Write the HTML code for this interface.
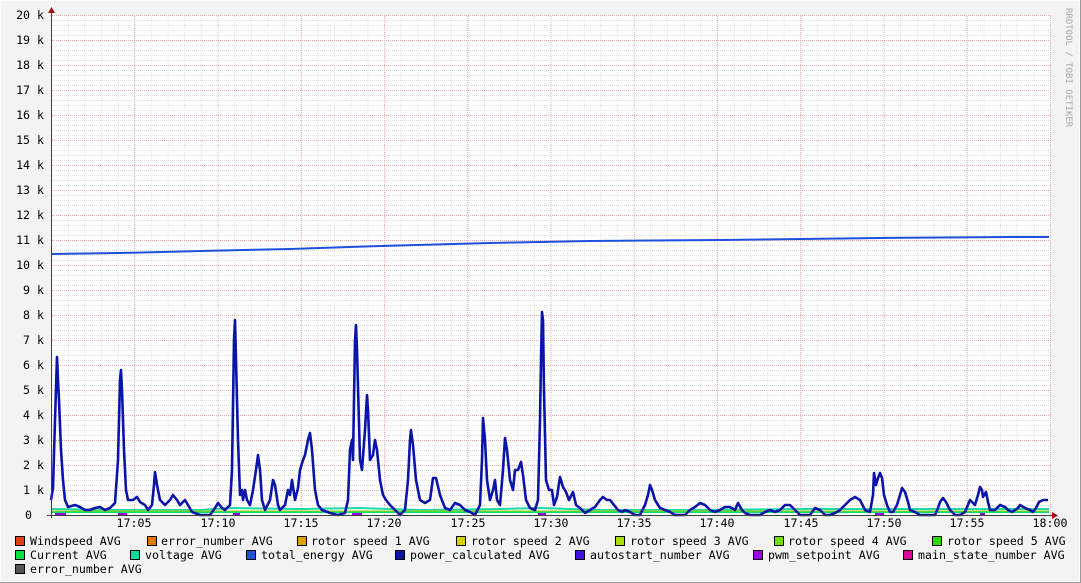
<!DOCTYPE html>
<html><head><meta charset="utf-8"><style>
html,body{margin:0;padding:0;background:#f3f3f3;}
svg{display:block;}
text{font-family:"DejaVu Sans Mono","Liberation Mono",monospace;font-size:11.6px;fill:#000;}
</style></head><body>
<svg width="1081" height="583" viewBox="0 0 1081 583" xmlns="http://www.w3.org/2000/svg">
<defs>
<pattern id="hmin" x="0" y="15" width="1081" height="5" patternUnits="userSpaceOnUse"><line x1="0" y1="0.5" x2="1081" y2="0.5" stroke="#e2e2e2" stroke-dasharray="1,1"/></pattern>
<pattern id="vmin" x="51" y="0" width="16.65" height="583" patternUnits="userSpaceOnUse"><line x1="0.5" y1="0" x2="0.5" y2="583" stroke="#e2e2e2" stroke-dasharray="1,1"/></pattern>
<pattern id="hmaj" x="0" y="15" width="1081" height="25" patternUnits="userSpaceOnUse"><line x1="0" y1="0.5" x2="1081" y2="0.5" stroke="#ecacac" stroke-dasharray="1,1"/></pattern>
<pattern id="vmaj" x="51" y="0" width="83.25" height="583" patternUnits="userSpaceOnUse"><line x1="0.5" y1="0" x2="0.5" y2="583" stroke="#ecacac" stroke-dasharray="1,1"/></pattern>
</defs>
<rect x="0" y="0" width="1081" height="583" fill="#f3f3f3"/>
<rect x="0.5" y="0.5" width="1079" height="581" fill="none" stroke="#fcfcfc"/>
<line x1="1080.5" y1="0" x2="1080.5" y2="583" stroke="#9a9a9a"/>
<line x1="0" y1="582.5" x2="1081" y2="582.5" stroke="#9a9a9a"/>
<rect x="51" y="15" width="1000" height="500" fill="#fff"/>
<rect x="51" y="15" width="1000" height="500" fill="url(#hmin)"/>
<rect x="51" y="15" width="1000" height="500" fill="url(#vmin)"/>
<rect x="51" y="15" width="1000" height="500" fill="url(#hmaj)"/>
<rect x="51" y="15" width="1000" height="500" fill="url(#vmaj)"/>
<g text-anchor="end">
<text x="44" y="19">20 k</text><text x="44" y="44">19 k</text><text x="44" y="69">18 k</text><text x="44" y="94">17 k</text><text x="44" y="119">16 k</text><text x="44" y="144">15 k</text><text x="44" y="169">14 k</text><text x="44" y="194">13 k</text><text x="44" y="219">12 k</text><text x="44" y="244">11 k</text><text x="44" y="269">10 k</text><text x="44" y="294">9 k</text><text x="44" y="319">8 k</text><text x="44" y="344">7 k</text><text x="44" y="369">6 k</text><text x="44" y="394">5 k</text><text x="44" y="419">4 k</text><text x="44" y="444">3 k</text><text x="44" y="469">2 k</text><text x="44" y="494">1 k</text><text x="32" y="519">0</text>
</g>
<g text-anchor="middle">
<text x="134" y="527">17:05</text><text x="218" y="527">17:10</text><text x="301" y="527">17:15</text><text x="384" y="527">17:20</text><text x="468" y="527">17:25</text><text x="551" y="527">17:30</text><text x="634" y="527">17:35</text><text x="717" y="527">17:40</text><text x="801" y="527">17:45</text><text x="884" y="527">17:50</text><text x="967" y="527">17:55</text><text x="1050" y="527">18:00</text>
</g>
<polyline fill="none" stroke="#00e070" stroke-width="2" points="51,512 1049,512"/>
<polyline fill="none" stroke="#20d8a8" stroke-width="2" points="51,509 120,510 200,510 230,508 300,509 360,508 420,510 500,509 540,508 600,510 700,510 800,509 900,509 1000,509 1049,509"/>
<polyline fill="none" stroke="#b0d000" stroke-width="1" points="51,511 1049,511"/>
<g stroke="#a000e0" stroke-width="2"><line x1="55" y1="514" x2="66" y2="514"/><line x1="118" y1="514" x2="127" y2="514"/><line x1="233" y1="514" x2="240" y2="514"/><line x1="352" y1="514" x2="362" y2="514"/><line x1="538" y1="514" x2="546" y2="514"/><line x1="875" y1="514" x2="884" y2="514"/><line x1="980" y1="514" x2="985" y2="514"/></g>
<polyline fill="none" stroke="#1e50dc" stroke-width="2" points="51,254 120,253 200,251 290,249 380,246 490,243 590,241 720,240 880,238 1010,237 1049,237"/>
<polyline fill="none" stroke="#0a14a8" stroke-width="2.6" stroke-linejoin="round" points="51,500 53,488 55,420 57,357 58,380 59,400 61,450 63,480 65,500 68,507 75,505 80,507 85,510 90,510 95,508 100,507 105,510 110,508 113,505 115,503 118,460 120,380 121,370 122,390 124,450 126,490 128,500 133,500 137,497 140,502 145,505 148,510 152,505 154,485 155,472 157,485 160,500 165,505 170,500 173,495 177,500 180,505 185,500 188,505 192,512 200,515 210,515 215,508 218,503 222,508 225,510 230,505 232,470 234,340 235,320 236,360 238,440 240,495 242,490 243,500 245,490 247,500 250,505 253,490 256,470 258,455 260,470 262,500 265,510 270,500 273,480 275,485 278,505 280,510 285,505 288,490 290,495 292,480 295,500 298,488 300,470 303,460 305,455 308,440 310,433 312,450 315,490 318,505 322,510 330,513 338,515 345,513 348,500 350,450 352,440 353,460 355,340 356,325 357,350 360,460 362,470 365,430 367,395 368,410 370,460 373,455 375,440 377,450 380,480 383,495 386,500 390,505 395,510 400,515 405,510 408,480 410,440 411,430 413,445 416,480 420,500 425,503 430,500 433,478 436,478 440,495 445,508 450,510 455,503 460,505 465,510 470,512 475,515 480,505 482,460 483,418 485,440 487,480 490,500 493,490 495,480 497,500 500,505 503,470 505,438 507,450 510,480 513,490 515,470 518,470 521,462 523,475 526,500 530,508 535,510 538,500 540,420 541,360 542,312 543,320 544,390 546,480 549,490 552,490 554,505 557,497 560,477 563,487 566,492 569,500 573,492 576,505 580,508 585,513 590,510 595,507 600,500 603,497 607,500 610,500 614,505 618,510 622,512 625,510 630,512 635,515 640,515 645,505 648,495 650,485 652,490 655,500 660,508 665,510 670,512 675,515 685,515 690,510 695,507 700,503 705,505 710,510 715,512 720,510 725,507 730,507 735,510 738,503 742,510 745,513 750,515 760,515 765,512 770,510 775,512 780,510 785,505 790,505 795,510 800,515 810,515 815,508 820,510 825,515 830,515 835,513 840,510 845,505 850,500 855,497 860,500 865,510 870,512 873,495 874,473 876,485 878,478 880,473 882,478 884,495 887,505 890,512 893,512 897,505 900,495 902,488 905,492 908,502 910,510 915,512 920,515 935,515 938,508 940,502 943,498 946,502 950,510 955,515 960,515 965,512 970,500 972,502 975,505 978,495 980,487 982,490 983,497 986,492 988,502 990,510 995,510 1000,505 1005,507 1008,510 1012,512 1015,510 1018,508 1020,505 1025,508 1030,510 1033,512 1036,508 1039,502 1043,500 1048,500"/>
<line x1="51.5" y1="10" x2="51.5" y2="518" stroke="#404040"/>
<line x1="47" y1="515.5" x2="1055" y2="515.5" stroke="#404040"/>
<polygon points="48,13 55,13 51.5,7" fill="#a01010"/>
<polygon points="1052,512 1052,519 1058,515.5" fill="#a01010"/>
<text x="1066" y="8" transform="rotate(90 1066 8)" style="font-size:9px;fill:#a8a8a8">RRDTOOL / TOBI OETIKER</text>
<g stroke="#000" stroke-width="1">
<rect x="15.5" y="536.5" width="9" height="9" fill="#e04010"/>
<rect x="147.5" y="536.5" width="9" height="9" fill="#e07800"/>
<rect x="297.5" y="536.5" width="9" height="9" fill="#e0a000"/>
<rect x="456.5" y="536.5" width="9" height="9" fill="#d8d000"/>
<rect x="615.5" y="536.5" width="9" height="9" fill="#a8e000"/>
<rect x="774.5" y="536.5" width="9" height="9" fill="#70e000"/>
<rect x="932.5" y="536.5" width="9" height="9" fill="#30d800"/>
<rect x="15.5" y="550.5" width="9" height="9" fill="#00e040"/>
<rect x="130.5" y="550.5" width="9" height="9" fill="#10d8a0"/>
<rect x="246.5" y="550.5" width="9" height="9" fill="#1e50dc"/>
<rect x="395.5" y="550.5" width="9" height="9" fill="#0a14a8"/>
<rect x="575.5" y="550.5" width="9" height="9" fill="#4010e0"/>
<rect x="753.5" y="550.5" width="9" height="9" fill="#a000e0"/>
<rect x="903.5" y="550.5" width="9" height="9" fill="#e0009a"/>
<rect x="15.5" y="564.5" width="9" height="9" fill="#555"/>
</g>
<text x="30" y="545">Windspeed AVG</text>
<text x="161" y="545">error_number AVG</text>
<text x="311" y="545">rotor speed 1 AVG</text>
<text x="471" y="545">rotor speed 2 AVG</text>
<text x="630" y="545">rotor speed 3 AVG</text>
<text x="788" y="545">rotor speed 4 AVG</text>
<text x="947" y="545">rotor speed 5 AVG</text>
<text x="30" y="559">Current AVG</text>
<text x="145" y="559">voltage AVG</text>
<text x="261" y="559">total_energy AVG</text>
<text x="410" y="559">power_calculated AVG</text>
<text x="590" y="559">autostart_number AVG</text>
<text x="768" y="559">pwm_setpoint AVG</text>
<text x="918" y="559">main_state_number AVG</text>
<text x="30" y="573">error_number AVG</text>
</svg>
</body></html>
